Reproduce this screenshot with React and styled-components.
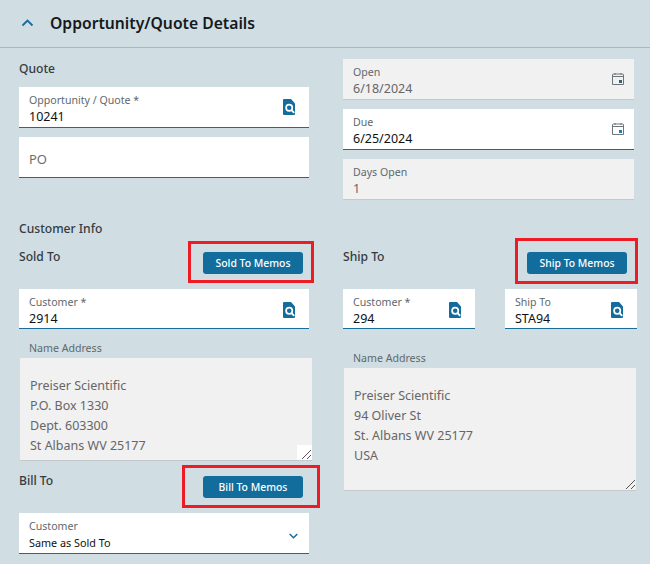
import React from 'react';
import styled, { createGlobalStyle } from 'styled-components';

const GlobalStyle = createGlobalStyle`
  html, body {
    margin: 0;
    padding: 0;
    background: #d0dde2;
    font-family: "Noto Sans", "Open Sans", sans-serif;
  }
`;

const Page = styled.div`
  width: 650px;
  height: 564px;
  overflow: hidden;
`;

const Header = styled.header`
  display: flex;
  box-sizing: content-box;
  align-items: center;
  gap: 16px;
  height: 45px;
  padding: 0 0 2px 21px;
  border-bottom: 1px solid #9dbcc8;
`;

const Chevron = styled.svg`
  width: 13px;
  height: 8px;
  color: #1a6c9a;
`;

const Title = styled.h1`
  margin: 0;
  font-size: 15.7px;
  font-weight: 600;
  color: #14191d;
`;

const Columns = styled.div`
  display: grid;
  grid-template-columns: 290px 294px;
  column-gap: 34px;
  padding-left: 19px;
`;

const Stack = styled.div`
  display: flex;
  flex-direction: column;
  gap: 9px;
`;

const TopLeft = styled(Stack)`
  padding-top: 10px;
`;

const TopRight = styled(Stack)`
  padding-top: 11px;
  width: 291px;
`;

const GroupTitle = styled.h2`
  margin: 0 0 -2px;
  font-size: 12.1px;
  line-height: 22px;
  font-weight: 500;
  color: #333b40;
`;

const Field = styled.div`
  position: relative;
  box-sizing: border-box;
  height: ${(p) => p.$height || 41}px;
  width: ${(p) => p.$width || '100%'};
  padding: 6px 10px 0;
  background: ${(p) => (p.$readOnly ? '#f1f1f1' : '#fff')};
  border-bottom: 1px solid ${(p) => (p.$readOnly ? '#c6c9cb' : '#1a6c9a')};
`;

const FieldLabel = styled.div`
  font-size: 10.6px;
  line-height: 15px;
  color: #5f686d;
`;

const FieldValue = styled.div`
  font-size: ${(p) => (p.$small ? 10.8 : 12.5)}px;
  line-height: 17px;
  color: ${(p) => (p.$readOnly ? '#666' : '#111')};
  white-space: nowrap;
`;

const Placeholder = styled.div`
  font-size: 13px;
  line-height: 40px;
  margin-top: -4px;
  color: #6a6f73;
`;

const FieldIcon = styled.div`
  position: absolute;
  top: ${(p) => p.$top || 12}px;
  right: ${(p) => p.$right || 14}px;
  display: flex;
`;

const InfoTitle = styled(GroupTitle)`
  margin-top: 18px;
  margin-left: 19px;
`;

const TitleRow = styled.div`
  display: flex;
  box-sizing: border-box;
  justify-content: space-between;
  align-items: flex-start;
  height: ${(p) => p.$height || 42}px;
  padding-right: ${(p) => p.$pad || 6}px;
  padding-top: ${(p) => p.$top || 0}px;
`;

const ButtonSlot = styled.div`
  position: relative;
  margin-top: ${(p) => p.$top || 0}px;
`;

const MemoButton = styled.button`
  display: block;
  width: 100px;
  height: 22px;
  padding: 0;
  border: 0;
  border-radius: 3px;
  background: #136d9c;
  color: #fff;
  font-family: inherit;
  font-size: 10.4px;
  font-weight: 500;
`;

const Highlight = styled.div`
  position: absolute;
  top: ${(p) => p.$box[0]}px;
  right: ${(p) => p.$box[1]}px;
  bottom: ${(p) => p.$box[2]}px;
  left: ${(p) => p.$box[3]}px;
  border: 3px solid #ed1c24;
  pointer-events: none;
`;

const FieldRow = styled.div`
  display: flex;
  justify-content: space-between;
`;

const AddressLabel = styled.div`
  margin: ${(p) => p.$top}px 0 2px 10px;
  font-size: 10.6px;
  line-height: 15px;
  color: #5f686d;
`;

const AddressWrap = styled.div`
  position: relative;
  margin-left: 1px;
  width: ${(p) => p.$width}px;
  height: ${(p) => p.$height}px;
`;

const Address = styled.textarea`
  display: block;
  box-sizing: border-box;
  width: 100%;
  height: 100%;
  padding: 18px 10px 0;
  border: 0;
  border-bottom: 1px solid #c6c9cb;
  border-radius: 0;
  outline: none;
  resize: none;
  background: #f1f1f1;
  color: #666;
  font-family: inherit;
  font-size: 12.5px;
  line-height: 20px;
  overflow: hidden;
`;

const GripCorner = styled.div`
  position: absolute;
  right: 0;
  bottom: 1px;
  width: 15px;
  height: 15px;
  background: ${(p) => (p.$boxed ? '#fff' : 'transparent')};
  pointer-events: none;
`;

const Grip = styled.svg`
  display: block;
  width: 15px;
  height: 15px;
`;

const LookupIcon = () => (
  <svg width="12" height="16" viewBox="0 0 12 16">
    <path d="M1 0h7l4 4.5V15a1 1 0 0 1-1 1H1a1 1 0 0 1-1-1V1a1 1 0 0 1 1-1z" fill="#136d9c" />
    <circle cx="6.2" cy="8.8" r="3.1" fill="none" stroke="#fff" strokeWidth="1.7" />
    <path d="M8.4 11 11.2 13.8" stroke="#fff" strokeWidth="1.8" />
  </svg>
);

const CalendarIcon = ({ dot }) => (
  <svg width="12" height="12" viewBox="0 0 12 12">
    <path d="M0.5 11.5V2a1 1 0 0 1 1-1h9a1 1 0 0 1 1 1v9.5z" fill="none" stroke="#6f7478" />
    <path d="M0.5 3.5h11" stroke="#6f7478" />
    <path d="M3 0v2M9 0v2" stroke="#6f7478" />
    <rect x="7" y="7" width="3" height="3" fill={dot} />
  </svg>
);

const DownChevron = () => (
  <svg width="9" height="6" viewBox="0 0 9 6">
    <path d="M0.7 1l3.8 3.8L8.3 1" fill="none" stroke="#1a6c9a" strokeWidth="1.5" />
  </svg>
);

const ResizeGrip = () => (
  <Grip viewBox="0 0 15 15">
    <path d="M5 14 14 5M10 14l4-4" stroke="#555" strokeWidth="1" />
  </Grip>
);

const Memo = ({ children, box, top }) => (
  <ButtonSlot $top={top}>
    <MemoButton type="button">{children}</MemoButton>
    <Highlight $box={box} />
  </ButtonSlot>
);

const TextField = ({ label, value, icon, readOnly, small, width, height, iconTop, iconRight }) => (
  <Field $readOnly={readOnly} $width={width} $height={height}>
    <FieldLabel>{label}</FieldLabel>
    <FieldValue $readOnly={readOnly} $small={small}>{value}</FieldValue>
    {icon && (
      <FieldIcon $top={iconTop} $right={iconRight}>
        {icon}
      </FieldIcon>
    )}
  </Field>
);

const App = () => {
  return (
    <Page>
      <GlobalStyle />
      <Header>
        <Chevron viewBox="0 0 13 8">
          <path d="M1.5 6.5 6.5 1.5l5 5" fill="none" stroke="currentColor" strokeWidth="1.8" />
        </Chevron>
        <Title>Opportunity/Quote Details</Title>
      </Header>

      <Columns>
        <TopLeft>
          <GroupTitle>Quote</GroupTitle>
          <TextField label="Opportunity / Quote *" value="10241" icon={<LookupIcon />} />
          <Field>
            <Placeholder>PO</Placeholder>
          </Field>
        </TopLeft>
        <TopRight>
          <TextField label="Open" value="6/18/2024" readOnly icon={<CalendarIcon dot="#35607a" />} iconRight={10} iconTop={14} />
          <TextField label="Due" value="6/25/2024" icon={<CalendarIcon dot="#1a7fbf" />} iconRight={10} iconTop={14} />
          <TextField label="Days Open" value="1" readOnly />
        </TopRight>
      </Columns>

      <InfoTitle>Customer Info</InfoTitle>

      <Columns>
        <div>
          <TitleRow $top={8} $height={51}>
            <GroupTitle>Sold To</GroupTitle>
            <Memo top={6} box={[-11, -11, -9, -15]}>Sold To Memos</Memo>
          </TitleRow>
          <TextField label="Customer *" value="2914" icon={<LookupIcon />} height={40} iconTop={13} />
          <AddressLabel $top={12}>Name Address</AddressLabel>
          <AddressWrap $width={292} $height={103}>
            <Address readOnly value={'Preiser Scientific\nP.O. Box 1330\nDept. 603300\nSt Albans WV 25177'} />
            <GripCorner $boxed>
              <ResizeGrip />
            </GripCorner>
          </AddressWrap>
          <TitleRow $top={9} $height={52}>
            <GroupTitle>Bill To</GroupTitle>
            <Memo top={6} box={[-11, -17, -10, -21]}>Bill To Memos</Memo>
          </TitleRow>
          <TextField label="Customer" value="Same as Sold To" small icon={<DownChevron />} iconTop={20} iconRight={11} />
        </div>
        <div>
          <TitleRow $top={8} $height={51} $pad={10}>
            <GroupTitle>Ship To</GroupTitle>
            <Memo top={6} box={[-14, -11, -10, -12]}>Ship To Memos</Memo>
          </TitleRow>
          <FieldRow>
            <TextField label="Customer *" value="294" icon={<LookupIcon />} width="132px" height={40} iconTop={13} />
            <TextField label="Ship To" value="STA94" icon={<LookupIcon />} width="132px" height={40} iconTop={13} />
          </FieldRow>
          <AddressLabel $top={22}>Name Address</AddressLabel>
          <AddressWrap $width={292} $height={123}>
            <Address readOnly value={'Preiser Scientific\n94 Oliver St\nSt. Albans WV 25177\nUSA'} />
            <GripCorner>
              <ResizeGrip />
            </GripCorner>
          </AddressWrap>
        </div>
      </Columns>
    </Page>
  );
};

export default App;
